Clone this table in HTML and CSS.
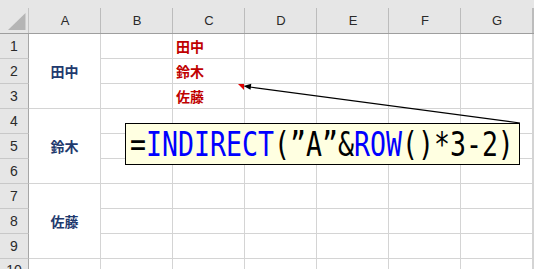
FILE: index.html
```html
<!DOCTYPE html>
<html lang="ja">
<head>
<meta charset="utf-8">
<title>INDIRECT</title>
<link rel="stylesheet" href="styles.css">
</head>
<body>
<div class="sheet">
  <div class="corner"><svg width="29" height="34" viewBox="0 0 29 34"><polygon points="8,30 25.5,30 25.5,13" fill="#b5b5b5"/></svg></div>
  <div class="colhdr">A</div><div class="colhdr">B</div><div class="colhdr">C</div><div class="colhdr">D</div><div class="colhdr">E</div><div class="colhdr">F</div><div class="colhdr">G</div><div class="colhdr"></div>

  <div class="rowhdr">1</div><div class="cell name span3">田中</div><div class="cell"></div><div class="cell red">田中</div><div class="cell"></div><div class="cell"></div><div class="cell"></div><div class="cell"></div><div class="cell"></div>
  <div class="rowhdr">2</div><div class="cell"></div><div class="cell red">鈴木</div><div class="cell"></div><div class="cell"></div><div class="cell"></div><div class="cell"></div><div class="cell"></div>
  <div class="rowhdr">3</div><div class="cell"></div><div class="cell red">佐藤</div><div class="cell"></div><div class="cell"></div><div class="cell"></div><div class="cell"></div><div class="cell"></div>

  <div class="rowhdr">4</div><div class="cell name span3">鈴木</div><div class="cell"></div><div class="cell"></div><div class="cell"></div><div class="cell"></div><div class="cell"></div><div class="cell"></div><div class="cell"></div>
  <div class="rowhdr">5</div><div class="cell"></div><div class="cell"></div><div class="cell"></div><div class="cell"></div><div class="cell"></div><div class="cell"></div><div class="cell"></div>
  <div class="rowhdr">6</div><div class="cell"></div><div class="cell"></div><div class="cell"></div><div class="cell"></div><div class="cell"></div><div class="cell"></div><div class="cell"></div>

  <div class="rowhdr">7</div><div class="cell name span3">佐藤</div><div class="cell"></div><div class="cell"></div><div class="cell"></div><div class="cell"></div><div class="cell"></div><div class="cell"></div><div class="cell"></div>
  <div class="rowhdr">8</div><div class="cell"></div><div class="cell"></div><div class="cell"></div><div class="cell"></div><div class="cell"></div><div class="cell"></div><div class="cell"></div>
  <div class="rowhdr">9</div><div class="cell"></div><div class="cell"></div><div class="cell"></div><div class="cell"></div><div class="cell"></div><div class="cell"></div><div class="cell"></div>

  <div class="rowhdr last">10</div><div class="cell last"></div><div class="cell last"></div><div class="cell last"></div><div class="cell last"></div><div class="cell last"></div><div class="cell last"></div><div class="cell last"></div><div class="cell last"></div>
</div>

<div class="formula"><span class="ftext">=<span class="fn">INDIRECT</span>(”A”&amp;<span class="fn">ROW</span>()*3-2)</span></div>

<svg class="arrow" width="534" height="269" viewBox="0 0 534 269">
  <polygon points="238,84 244,84 244,90" fill="#e00000"/>
  <line x1="250" y1="87" x2="520" y2="123" stroke="#000" stroke-width="1.2"/>
  <polygon points="243.5,86 251.3,83.8 250.5,89.8" fill="#000"/>
</svg>
</body>
</html>
```

FILE: styles.css
```css
html, body {
  margin: 0;
  padding: 0;
  background: #fff;
}
body {
  width: 534px;
  height: 269px;
  overflow: hidden;
  position: relative;
}
.sheet {
  display: grid;
  grid-template-columns: 29px repeat(7, 72px) 1fr;
  grid-template-rows: 34px repeat(9, 25px) 10px;
  width: 534px;
  height: 269px;
  overflow: hidden;
}
.sheet > div {
  box-sizing: border-box;
  min-width: 0;
}
.corner {
  background: #e6e6e6 linear-gradient(#c4c4c4, #c4c4c4) no-repeat right bottom / 1px 25px;
  border-bottom: 1px solid #9e9e9e;
}
.corner svg {
  display: block;
}
.colhdr {
  background: #e6e6e6 linear-gradient(#bcbcbc, #bcbcbc) no-repeat right bottom / 1px 25px;
  border-bottom: 1px solid #9e9e9e;
  padding-top: 8px;
  display: flex;
  align-items: center;
  justify-content: center;
  font-family: "Liberation Sans", Arial, sans-serif;
  font-size: 13px;
  color: #2a2a2a;
}
.rowhdr {
  background: #e6e6e6;
  border-right: 1px solid #a6a6a6;
  border-bottom: 1px solid #c8c8c8;
  display: flex;
  align-items: center;
  justify-content: center;
  font-family: "Liberation Sans", Arial, sans-serif;
  font-size: 14px;
  color: #2a2a2a;
}
.rowhdr.last {
  align-items: flex-start;
  padding-top: 3px;
  line-height: 16px;
  border-bottom: 0;
  overflow: hidden;
}
.cell {
  border-right: 1px solid #d4d4d4;
  border-bottom: 1px solid #d4d4d4;
  display: flex;
  align-items: center;
  font-family: "Noto Sans CJK JP", sans-serif;
  font-size: 14px;
  font-weight: bold;
  white-space: nowrap;
}
.cell.last {
  border-bottom: 0;
}
.span3 {
  grid-row: span 3;
}
.name {
  justify-content: center;
  color: #1f3a6e;
}
.red {
  color: #c00000;
  padding-left: 3px;
}
.formula {
  position: absolute;
  left: 125px;
  top: 123px;
  width: 395px;
  height: 42px;
  box-sizing: border-box;
  border: 1px solid #000;
  background: #ffffe1;
  padding-left: 4px;
  display: flex;
  align-items: center;
  overflow: hidden;
}
.ftext {
  display: inline-block;
  font-family: "DejaVu Sans Mono", monospace;
  font-size: 33px;
  line-height: 1;
  color: #000;
  white-space: nowrap;
  transform: scaleX(0.805);
  transform-origin: left center;
}
.fn {
  color: #0000ff;
}
.arrow {
  position: absolute;
  left: 0;
  top: 0;
  pointer-events: none;
}
```
